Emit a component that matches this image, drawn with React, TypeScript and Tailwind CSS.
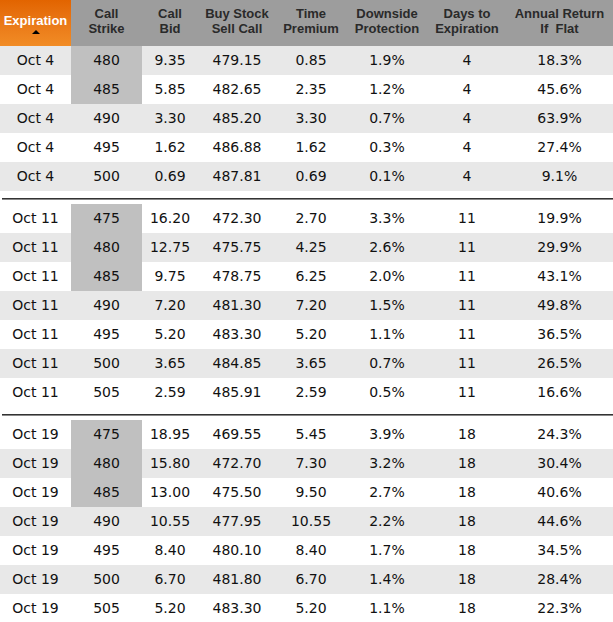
import React from "react";

type Row = {
  exp: string;
  strike: number;
  bid: string;
  buy: string;
  prem: string;
  down: string;
  days: number;
  ret: string;
  hl?: boolean;
};

const groups: Row[][] = [
  [
    { exp: "Oct 4", strike: 480, bid: "9.35", buy: "479.15", prem: "0.85", down: "1.9%", days: 4, ret: "18.3%", hl: true },
    { exp: "Oct 4", strike: 485, bid: "5.85", buy: "482.65", prem: "2.35", down: "1.2%", days: 4, ret: "45.6%", hl: true },
    { exp: "Oct 4", strike: 490, bid: "3.30", buy: "485.20", prem: "3.30", down: "0.7%", days: 4, ret: "63.9%" },
    { exp: "Oct 4", strike: 495, bid: "1.62", buy: "486.88", prem: "1.62", down: "0.3%", days: 4, ret: "27.4%" },
    { exp: "Oct 4", strike: 500, bid: "0.69", buy: "487.81", prem: "0.69", down: "0.1%", days: 4, ret: "9.1%" },
  ],
  [
    { exp: "Oct 11", strike: 475, bid: "16.20", buy: "472.30", prem: "2.70", down: "3.3%", days: 11, ret: "19.9%", hl: true },
    { exp: "Oct 11", strike: 480, bid: "12.75", buy: "475.75", prem: "4.25", down: "2.6%", days: 11, ret: "29.9%", hl: true },
    { exp: "Oct 11", strike: 485, bid: "9.75", buy: "478.75", prem: "6.25", down: "2.0%", days: 11, ret: "43.1%", hl: true },
    { exp: "Oct 11", strike: 490, bid: "7.20", buy: "481.30", prem: "7.20", down: "1.5%", days: 11, ret: "49.8%" },
    { exp: "Oct 11", strike: 495, bid: "5.20", buy: "483.30", prem: "5.20", down: "1.1%", days: 11, ret: "36.5%" },
    { exp: "Oct 11", strike: 500, bid: "3.65", buy: "484.85", prem: "3.65", down: "0.7%", days: 11, ret: "26.5%" },
    { exp: "Oct 11", strike: 505, bid: "2.59", buy: "485.91", prem: "2.59", down: "0.5%", days: 11, ret: "16.6%" },
  ],
  [
    { exp: "Oct 19", strike: 475, bid: "18.95", buy: "469.55", prem: "5.45", down: "3.9%", days: 18, ret: "24.3%", hl: true },
    { exp: "Oct 19", strike: 480, bid: "15.80", buy: "472.70", prem: "7.30", down: "3.2%", days: 18, ret: "30.4%", hl: true },
    { exp: "Oct 19", strike: 485, bid: "13.00", buy: "475.50", prem: "9.50", down: "2.7%", days: 18, ret: "40.6%", hl: true },
    { exp: "Oct 19", strike: 490, bid: "10.55", buy: "477.95", prem: "10.55", down: "2.2%", days: 18, ret: "44.6%" },
    { exp: "Oct 19", strike: 495, bid: "8.40", buy: "480.10", prem: "8.40", down: "1.7%", days: 18, ret: "34.5%" },
    { exp: "Oct 19", strike: 500, bid: "6.70", buy: "481.80", prem: "6.70", down: "1.4%", days: 18, ret: "28.4%" },
    { exp: "Oct 19", strike: 505, bid: "5.20", buy: "483.30", prem: "5.20", down: "1.1%", days: 18, ret: "22.3%" },
  ],
];

const cols = "grid grid-cols-[71px_71px_56px_78px_70px_82px_78px_107px]";

const headers = [
  ["Call", "Strike"],
  ["Call", "Bid"],
  ["Buy Stock", "Sell Call"],
  ["Time", "Premium"],
  ["Downside", "Protection"],
  ["Days to", "Expiration"],
  ["Annual Return", "If  Flat"],
];

export default function App() {
  return (
    <div className="w-[613px] h-[622px] overflow-hidden bg-white text-[#111]">
      <div className={`${cols} h-[46px] bg-[#9d9d9d] font-['Liberation_Sans',Arial,sans-serif] font-bold text-[13px] leading-[15px] text-[#2a2a2a]`}>
        <div className="flex flex-col items-center justify-center bg-gradient-to-b from-[#e26400] to-[#f18c25] pt-[1px] text-white">
          <span>Expiration</span>
          <span className="mt-[2px] w-0 h-0 border-l-[4px] border-r-[4px] border-b-[4px] border-l-transparent border-r-transparent border-b-black" />
        </div>
        {headers.map((h, i) => (
          <div key={i} className="flex flex-col items-center justify-center text-center whitespace-pre pb-[4px]">
            <span>{h[0]}</span>
            <span>{h[1]}</span>
          </div>
        ))}
      </div>
      {groups.map((g, gi) => (
        <div key={gi}>
          {gi > 0 && (
            <div className="pt-[7px] pb-[4px] pl-[2px]">
              <div className="h-[2px] bg-[#333] border-b border-[#888]" />
            </div>
          )}
          {g.map((r, ri) => {
            const shaded = gi === 0 ? ri % 2 === 0 : ri % 2 === 1;
            return (
              <div
                key={ri}
                className={`${cols} h-[29px] items-stretch font-['DejaVu_Sans',Verdana,sans-serif] text-[14px] ${shaded ? "bg-[#e8e8e8]" : "bg-white"}`}
              >
                <div className="flex items-center justify-center">{r.exp}</div>
                <div className={`flex items-center justify-center ${r.hl ? "bg-[#c0c0c0]" : ""}`}>{r.strike}</div>
                <div className="flex items-center justify-center">{r.bid}</div>
                <div className="flex items-center justify-center">{r.buy}</div>
                <div className="flex items-center justify-center">{r.prem}</div>
                <div className="flex items-center justify-center">{r.down}</div>
                <div className="flex items-center justify-center">{r.days}</div>
                <div className="flex items-center justify-center">{r.ret}</div>
              </div>
            );
          })}
        </div>
      ))}
    </div>
  );
}
